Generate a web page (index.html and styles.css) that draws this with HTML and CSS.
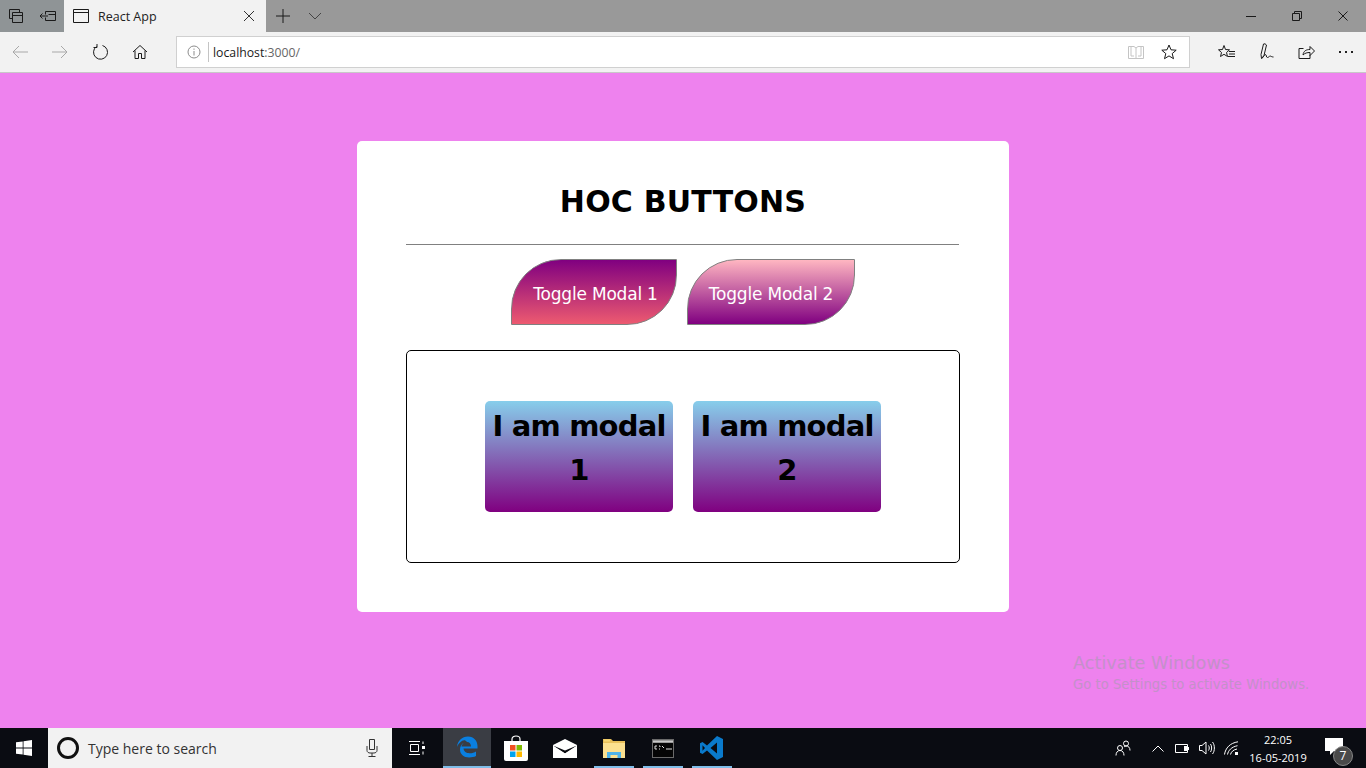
FILE: index.html
```html
<!DOCTYPE html>
<html lang="en">

<head>
  <meta charset="UTF-8">
  <title>React App</title>
  <link rel="stylesheet" href="styles.css">
</head>

<body>
  <!-- browser title bar -->
  <div class="tabstrip">
    <div class="tab-actions">
      <button class="strip-btn">
        <svg width="16" height="16" viewBox="0 0 16 16"><path d="M1.5 1.5h10v3M1.5 1.5v9h3M4.5 4.5h10v10h-10zM4.5 7.500h10" /></svg>
      </button>
      <button class="strip-btn">
        <svg width="18" height="16" viewBox="0 0 18 16"><path d="M6.5 3.5h10v9h-10v-3M6.5 3.5v3M1 8h8M3.5 5.5L1 8l2.5 2.5M9.500 6.500h7" /></svg>
      </button>
    </div>
    <div class="tab">
      <svg width="16" height="14" viewBox="0 0 16 14"><path d="M.5.5h15v13H.5zM.5 3.5h15" /></svg>
      <span class="tab-title">React App</span>
      <svg class="tab-close" width="12" height="12" viewBox="0 0 12 12"><path d="M1 1l10 10M11 1L1 11" /></svg>
    </div>
    <button class="strip-btn new-tab">
      <svg width="14" height="14" viewBox="0 0 14 14"><path d="M7 0v14M0 7h14" /></svg>
    </button>
    <button class="strip-btn tab-list">
      <svg width="14" height="8" viewBox="0 0 14 8"><path d="M1 1l6 6 6-6" /></svg>
    </button>
    <div class="window-btns">
      <button class="window-btn">
        <svg width="10" height="10" viewBox="0 0 10 10"><path d="M0 5.5h10" /></svg>
      </button>
      <button class="window-btn">
        <svg width="10" height="10" viewBox="0 0 10 10"><path d="M.5 2.5h7v7h-7zM2.5 2.5v-2h7v7h-2" /></svg>
      </button>
      <button class="window-btn">
        <svg width="10" height="10" viewBox="0 0 10 10"><path d="M.5.5l9 9M9.5.5l-9 9" /></svg>
      </button>
    </div>
  </div>

  <!-- address bar row -->
  <div class="toolbar">
    <button class="tool-btn off">
      <svg width="16" height="14" viewBox="0 0 16 14"><path d="M16 7H1M7 1L1 7l6 6" /></svg>
    </button>
    <button class="tool-btn off">
      <svg width="16" height="14" viewBox="0 0 16 14"><path d="M0 7h15M9 1l6 6-6 6" /></svg>
    </button>
    <button class="tool-btn">
      <svg width="16" height="16" viewBox="0 0 16 16"><path d="M4.500 2.500A7 7 0 1 0 10.500 1.500M5 0v3.500H1.500" /></svg>
    </button>
    <button class="tool-btn">
      <svg width="16" height="16" viewBox="0 0 16 16"><path d="M1 8l7-6.5L15 8M3 6.5v8h3.500v-5h3v5H13v-8" /></svg>
    </button>
    <div class="address">
      <svg class="info" width="14" height="14" viewBox="0 0 14 14"><circle cx="7" cy="7" r="6" /><path d="M7 6v4.500M7 3.500v1.300" /></svg>
      <span class="address-sep"></span>
      <span class="url">localhost<span class="url-rest">:3000/</span></span>
      <svg class="read" width="16" height="14" viewBox="0 0 16 14"><path d="M.5 1.500h5.500L8 3l2-1.500h5.500v12H.5zM8 3v10.500M3 1.500V11h3M13 1.500V11h-3" /></svg>
      <svg class="star" width="16" height="16" viewBox="0 0 16 16"><path d="M8 1l2 4.800 5.200.4-4 3.400 1.300 5.100L8 11.900l-4.500 2.800 1.300-5.100-4-3.400 5.200-.4z" /></svg>
    </div>
    <div class="tool-right">
      <button class="tool-btn">
        <svg width="17" height="16" viewBox="0 0 17 16"><path d="M6 1.500l1.500 4 4 .3-3 2.700 1 4L6 10.300l-3.500 2.200 1-4-3-2.700 4-.3zM11 7.500h6M11 10h6M10 12.500h7" /></svg>
      </button>
      <button class="tool-btn">
        <svg width="16" height="17" viewBox="0 0 16 17"><path d="M3.500 1L1 11.500l.5 4L4 12.500 6.500 2 5 .8zM2 15.500c1.500-2 2.500-4 3.500-4s.5 3 2 3 1.500-1.500 2.500-1.500 1.500 1 3.500 1" /></svg>
      </button>
      <button class="tool-btn">
        <svg width="17" height="16" viewBox="0 0 17 16"><path d="M5.500 4.500H1v10h11V11M5 11c.5-4 3-5.500 7-5.500v-3L16.500 7 12 11.500v-3c-3 0-5 .5-7 2.500z" /></svg>
      </button>
      <button class="tool-btn more">
        <svg width="16" height="4" viewBox="0 0 16 4"><rect x="1" y="1" width="2" height="2" /><rect x="7" y="1" width="2" height="2" /><rect x="13" y="1" width="2" height="2" /></svg>
      </button>
    </div>
  </div>

  <!-- the page itself -->
  <main class="page">
    <section class="card">
      <h1 class="card-title">HOC BUTTONS</h1>
      <hr class="card-rule">
      <div class="toggles">
        <button class="toggle toggle-one">Toggle Modal 1</button>
        <button class="toggle toggle-two">Toggle Modal 2</button>
      </div>
      <div class="modals">
        <div class="modal">I am modal 1</div>
        <div class="modal">I am modal 2</div>
      </div>
    </section>
    <div class="activate">
      <div class="activate-title">Activate Windows</div>
      <div class="activate-text">Go to Settings to activate Windows.</div>
    </div>
  </main>

  <!-- windows taskbar -->
  <footer class="taskbar">
    <button class="start">
      <svg width="16" height="16" viewBox="0 0 16 16"><path fill="#fff" d="M0 2.300l6.700-.9v6.200H0zM7.500 1.300L16 0v7.600H7.500zM0 8.400h6.700v6.200L0 13.700zM7.500 8.400H16V16l-8.500-1.200z" /></svg>
    </button>
    <div class="search">
      <span class="cortana"></span>
      <span class="search-text">Type here to search</span>
      <svg class="mic" width="12" height="18" viewBox="0 0 12 18"><path d="M3.500.5h5v10h-5zM1 7v4.500C1 13 2.500 14 4 14h4c1.500 0 3-1 3-2.500V7M6 14v3M2.500 17.500h7" /></svg>
    </div>
    <button class="taskview">
      <svg width="16" height="14" viewBox="0 0 16 14"><path d="M0 .5h11M0 13.500h11M1.500 3.500h8v7h-8zM14 .5V3M14 10.500v3" /><rect x="13" y="5" width="3" height="3" class="fill-white" /></svg>
    </button>
    <div class="task-apps">
      <div class="app active">
        <svg width="22" height="22" viewBox="0 0 22 22"><path fill="#0a7fe0" d="M1 11C1.500 5 6 .5 12 .5c6 0 9.500 4.500 9.500 9.500v2.500H7.500c.3 3 2.800 4.700 6 4.700 2.800 0 5-.8 6.500-1.800v4.700c-2 1-4.200 1.400-6.800 1.400-5.500 0-9.200-3.300-9.200-8 0-2.800 1.300-5.300 3.800-6.800-1.300 1.200-2 2.500-2.300 3.800h9.500c0-2.700-1.500-4.500-4-4.500C8 2 3.500 6 1 11z" /></svg>
      </div>
      <div class="app">
        <svg width="24" height="26" viewBox="0 0 24 26">
          <path class="bag-handle" d="M8 7V4c0-4 8-4 8 0v3" />
          <path fill="#fff" d="M0 6h24v18a2 2 0 0 1-2 2H2a2 2 0 0 1-2-2z" />
          <rect x="6" y="10" width="5.500" height="5.500" fill="#f25022" />
          <rect x="12.500" y="10" width="5.500" height="5.500" fill="#7fba00" />
          <rect x="6" y="16.500" width="5.500" height="5.500" fill="#00a4ef" />
          <rect x="12.500" y="16.500" width="5.500" height="5.500" fill="#ffb900" />
        </svg>
      </div>
      <div class="app">
        <svg width="24" height="19" viewBox="0 0 24 19">
          <path fill="#fff" d="M0 6L12 0l12 6v13H0z" />
          <path fill="#0a0c12" d="M0 6.500l12 5 12-5-12 8z" />
          <path fill="#fff" d="M0 7l12 7.500L24 7l-9 9-3-1-4 1z" />
        </svg>
      </div>
      <div class="app running">
        <svg width="22" height="20" viewBox="0 0 22 20">
          <path fill="#e8c05a" d="M0 1h8l2 2h12v17H0z" />
          <rect x="0" y="5" width="22" height="15" fill="#fbe08f" />
          <path fill="#4fb3e8" d="M4 20v-6h14v6h-3.500v-3h-7v3z" />
          <rect x="1" y="1.500" width="6" height="2" fill="#f7d774" />
        </svg>
      </div>
      <div class="app running">
        <svg width="22" height="19" viewBox="0 0 22 19">
          <rect width="22" height="19" fill="#6a6a6a" />
          <rect y="1.500" x="1" width="20" height="2" fill="#c8c8c8" />
          <rect x="1" y="4" width="20" height="14" fill="#050505" />
          <path class="prompt" d="M3 7h2M3 7v3h2M7 7h1v1M7 10h1M10 7l2 2M14 10h6" />
        </svg>
      </div>
      <div class="app running">
        <svg width="24" height="24" viewBox="0 0 24 24">
          <path fill="#0a7acb" d="M17 0l6 3v18l-6 3L7 14.500 2.500 18 0 16.700V7.300L2.500 6 7 9.500zM17 6.500L10.500 12l6.500 5.500zM2.500 9.300v5.400L5 12z" />
        </svg>
      </div>
    </div>
    <div class="tray">
      <svg class="tray-people" width="16" height="16" viewBox="0 0 16 16"><circle cx="5" cy="8" r="2.500" /><circle cx="11" cy="3.500" r="2.500" /><path d="M1 15.500c0-3 1.500-5 4-5s4 2 4 5M9 7c.5-.5 1-1 2-1 2.500 0 4 1.500 4 4.500" /></svg>
      <svg class="tray-chevron" width="12" height="7" viewBox="0 0 12 7"><path d="M.5 6.500L6 1l5.500 5.500" /></svg>
      <svg class="tray-icon" width="15" height="9" viewBox="0 0 15 9"><path d="M.5.500h12v8H.5zM13.500 3v3" /><rect x="9" y="2" width="3" height="5" class="fill-white" /></svg>
      <svg class="tray-icon" width="16" height="14" viewBox="0 0 16 14"><path d="M.5 4.500H3L7 1v12L3 9.500H.5zM9.500 4.500c1 1.500 1 3.500 0 5M11.500 3c1.500 2 1.500 6 0 8M13.500 1c2.500 3 2.500 9 0 12" /></svg>
      <svg class="tray-icon" width="15" height="14" viewBox="0 0 15 14"><path d="M.5 13.500C1.500 7 6 2 14 .8M3.500 13.500c.8-4 3.800-7.500 10-8.800M6.500 13.500c.6-2.500 2.800-4.800 6.500-5.500" /><rect x="11" y="11" width="3" height="3" class="fill-white" /></svg>
      <div class="clock">
        <div>22:05</div>
        <div>16-05-2019</div>
      </div>
      <div class="notify">
        <svg width="18" height="17" viewBox="0 0 18 17"><path fill="#fff" d="M0 0h18v13H9l-4 4v-4H0z" /></svg>
        <span class="notify-count">7</span>
      </div>
    </div>
  </footer>
</body>
</html>
```

FILE: styles.css
```css
* {
  box-sizing: border-box;
}

html,
body {
  height: 100%;
}

body {
  margin: 0;
  display: flex;
  flex-direction: column;
  overflow: hidden;
  font-family: "Open Sans", "Noto Sans", sans-serif;
}

button {
  padding: 0;
  border: none;
  background: none;
  display: flex;
  align-items: center;
  justify-content: center;
}

svg path:not([fill]),
svg circle {
  fill: none;
  stroke: #1a1a1a;
  stroke-width: 1;
}

/* title bar */
.tabstrip {
  height: 32px;
  flex: none;
  display: flex;
  background-color: #999;
}

.tab-actions {
  width: 64px;
  display: flex;
  background-color: #8f9496;
}

.strip-btn {
  width: 32px;
  height: 32px;
}

.tab {
  width: 202px;
  display: flex;
  align-items: center;
  padding: 0 11px 0 9px;
  background-color: #f2f2f2;
}

.tab-title {
  margin-left: 9px;
  flex: 1;
  font-size: 12.5px;
  color: #222;
}

.tab-close path:not([fill]) {
  stroke: #333;
}

.new-tab {
  width: 34px;
}

.tab-list {
  width: 30px;
}

.tab-list path:not([fill]) {
  stroke: #444;
}

.window-btns {
  margin-left: auto;
  display: flex;
}

.window-btn {
  width: 46px;
  height: 32px;
}

/* address bar */
.toolbar {
  height: 41px;
  flex: none;
  display: flex;
  align-items: center;
  padding: 0 0 1px 0;
  background-color: #f2f2f2;
  border-bottom: 1px solid #c8c8c8;
}

.tool-btn {
  width: 40px;
  height: 32px;
}

.off path:not([fill]) {
  stroke: #a8a8a8;
}

.address {
  width: 1014px;
  height: 32px;
  margin-left: 16px;
  display: flex;
  align-items: center;
  padding: 0 12px 0 10px;
  background-color: #fff;
  border: 1px solid #d0d0d0;
}

.info circle,
.info path:not([fill]) {
  stroke: #8c8c8c;
}

.address-sep {
  width: 1px;
  height: 20px;
  margin: 0 4px 0 7px;
  background-color: #c4c4c4;
}

.url {
  flex: 1;
  padding-top: 1px;
  font-size: 12.25px;
  color: #1a1a1a;
}

.url-rest {
  color: #666;
}

.read path:not([fill]) {
  stroke: #c4c4c4;
}

.star {
  margin-left: 17px;
}

.tool-right {
  margin-left: auto;
  display: flex;
  padding-right: 1px;
}

.tool-right .tool-btn {
  width: 39px;
}

.tool-right .tool-btn:first-child {
  margin-right: 1px;
  padding-right: 3px;
}

.more rect {
  fill: #222;
}

/* page */
.page {
  flex: 1;
  position: relative;
  display: flex;
  justify-content: center;
  padding-top: 68px;
  background-color: #ee82ee;
  font-family: "DejaVu Sans", sans-serif;
}

.card {
  width: 652px;
  height: 471px;
  padding: 35px 49px 0;
  background-color: #fff;
  border-radius: 5px;
}

.card-title {
  margin: 0;
  height: 52px;
  line-height: 52px;
  font-size: 30px;
  font-weight: bold;
  letter-spacing: .2px;
  text-align: center;
  color: #000;
}

.card-rule {
  margin: 16px 1px 14px 0;
  border: none;
  border-top: 1px solid #808080;
}

.toggles {
  display: flex;
  justify-content: center;
  gap: 10px;
  padding-right: 1px;
}

.toggle {
  height: 66px;
  padding-top: 3px;
  font-family: "DejaVu Sans", sans-serif;
  font-size: 17px;
  letter-spacing: -.2px;
  color: #fff;
  border: 1px solid #808080;
  border-radius: 50px 0;
}

.toggle-one {
  width: 166px;
  padding-left: 4px;
  background: linear-gradient(#800080, #ed5a70);
}

.toggle-two {
  width: 168px;
  padding-left: 1px;
  background: linear-gradient(#ffb6c1, #800080);
}

.modals {
  width: 554px;
  height: 213px;
  margin-top: 25px;
  display: flex;
  justify-content: center;
  align-items: center;
  gap: 20px;
  border: 1px solid #000;
  border-radius: 5px;
}

.modal {
  width: 188px;
  height: 111px;
  padding: 3px 3px 0;
  font-size: 29px;
  font-weight: bold;
  letter-spacing: -.8px;
  line-height: 44px;
  text-align: center;
  color: #000;
  background: linear-gradient(#87ceeb, #800080);
  border-radius: 5px;
}

/* watermark sits over the page */
.activate {
  position: absolute;
  left: 1073px;
  top: 577px;
  color: #c490c9;
}

.activate-title {
  font-size: 17.7px;
  line-height: 26px;
}

.activate-text {
  font-size: 13.2px;
  line-height: 18px;
}

/* taskbar */
.taskbar {
  height: 40px;
  flex: none;
  display: flex;
  background-color: #0a0c12;
}

.taskbar svg path:not([fill]),
.taskbar svg circle {
  stroke: #fff;
}

.fill-white {
  fill: #fff;
}

.start {
  width: 48px;
}

.search {
  width: 344px;
  display: flex;
  align-items: center;
  padding: 0 14px 0 9px;
  background-color: #f2f2f2;
}

.cortana {
  width: 22px;
  height: 22px;
  border: 3px solid #111;
  border-radius: 50%;
}

.search-text {
  flex: 1;
  margin-left: 9px;
  font-size: 14px;
  color: #333;
}

.taskbar .mic path:not([fill]) {
  stroke: #333;
}

.taskview {
  width: 51px;
  padding-right: 2px;
}

.task-apps {
  display: flex;
  gap: 1px;
}

.app {
  width: 48px;
  display: flex;
  align-items: center;
  justify-content: center;
  position: relative;
}

.app.active {
  background-color: #3a3d44;
  border-bottom: 2px solid #7fbde8;
}

.taskbar .bag-handle:not([fill]) {
  stroke-width: 1.2;
}

.taskbar .prompt:not([fill]) {
  stroke: #ddd;
}

.app.running::after {
  content: "";
  position: absolute;
  left: 4px;
  right: 4px;
  bottom: 0;
  height: 2px;
  background-color: #7fbde8;
}

.tray {
  margin-left: auto;
  display: flex;
  align-items: center;
}

.tray-people {
  margin-right: 21px;
}

.tray-chevron {
  margin-right: 11px;
}

.tray-icon {
  margin-right: 9px;
}

.clock {
  width: 60px;
  margin-right: 10px;
  padding-top: 2px;
  font-size: 11px;
  line-height: 18px;
  text-align: center;
  color: #fff;
}

.notify {
  width: 48px;
  height: 40px;
  position: relative;
  padding: 10px 0 0 7px;
}

.notify-count {
  position: absolute;
  left: 15px;
  top: 18px;
  width: 20px;
  height: 20px;
  line-height: 18px;
  font-size: 12px;
  text-align: center;
  color: #fff;
  background-color: #4a4a4a;
  border: 1px solid #888;
  border-radius: 50%;
}
```
